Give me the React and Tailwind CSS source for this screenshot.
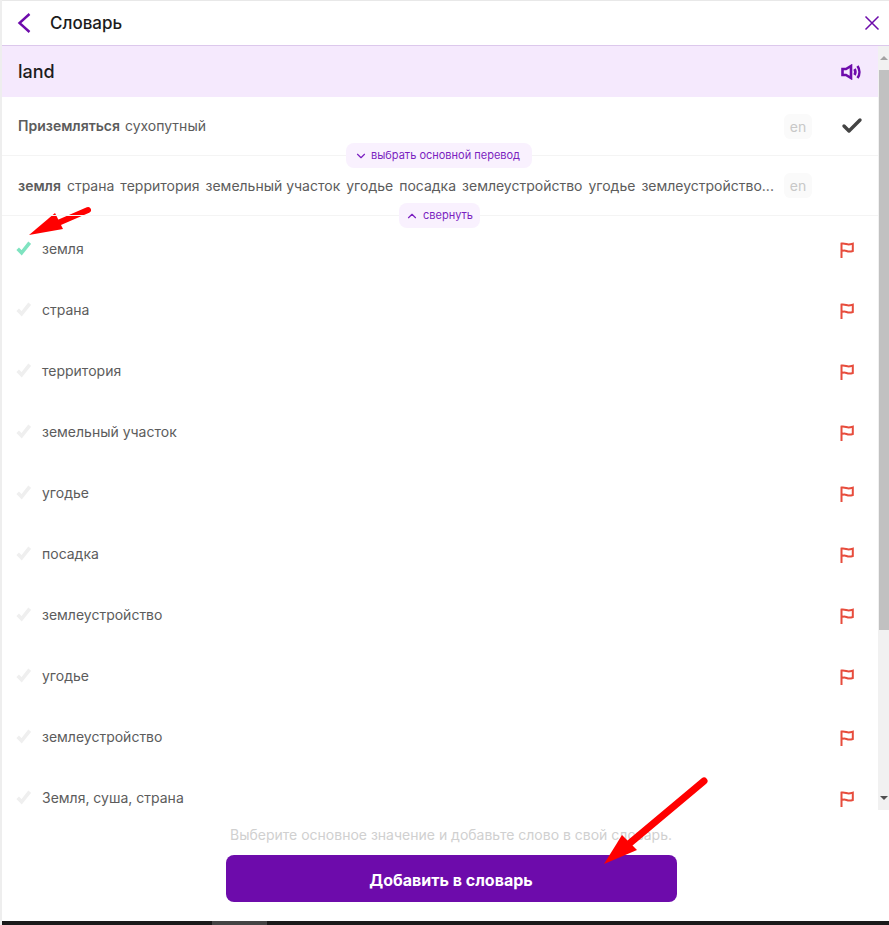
import { ChevronDown, ChevronUp, Check } from 'lucide-react';

const meanings = [
  'земля',
  'страна',
  'территория',
  'земельный участок',
  'угодье',
  'посадка',
  'землеустройство',
  'угодье',
  'землеустройство',
  'Земля, суша, страна',
];

const otherWords = [
  'страна',
  'территория',
  'земельный участок',
  'угодье',
  'посадка',
  'землеустройство',
  'угодье',
  'землеустройство...',
];

const CheckMark = ({ className }) => (
  <svg viewBox="0 0 16 16" className={className} fill="none">
    <path d="M1.8 8.2 L6 12.6 L14.6 1.8" stroke="currentColor" strokeWidth="3.8" />
  </svg>
);

const Flag = () => (
  <svg viewBox="0 0 14 16" className="w-[14px] h-[16px] text-[#e74c3c]" fill="none" stroke="currentColor" strokeWidth="2">
    <path d="M1.5 16 V1.6 C4.5 1 6.5 2.4 8.5 2.4 C10 2.4 11.5 2 12.8 1.6 V9 C10.5 9.8 8.5 9.8 6.5 9 C4.8 8.4 3 8.6 1.5 9" />
  </svg>
);

const Speaker = () => (
  <svg viewBox="0 0 20 16" className="w-5 h-4 text-[#6d0bab]" fill="none" stroke="currentColor" strokeWidth="2.6">
    <path d="M1.5 5 H5 L10 2 V14 L5 11 H1.5 Z" />
    <path d="M13.5 5 C14.6 6.8 14.6 9.2 13.5 11" />
    <path d="M16.5 2 C19 5.5 19 10.5 16.5 14" />
  </svg>
);

const Pill = ({ icon, children, className }) => (
  <div className={`absolute flex items-center h-[25px] rounded-[8px] bg-[#f9f1fe] text-[#7b1fc0] text-[11px] ${className}`}>
    {icon}
    {children}
  </div>
);

export default function App() {
  return (
    <div className="relative w-[889px] h-[925px] flex flex-col bg-white overflow-hidden border-l-2 border-[#eeeeee] font-['Inter',sans-serif]">
      <div className="h-[46px] shrink-0 flex items-center justify-between border-t border-b border-t-[#e8e8e8] border-b-[#dcc8ec] pl-[15px] pr-[9px]">
        <div className="flex items-center">
          <svg viewBox="0 0 14 20" className="w-[14px] h-[20px] text-[#6d0bab]" fill="none" stroke="currentColor" strokeWidth="2.4">
            <path d="M12.5 1 L2.5 10 L12.5 19" />
          </svg>
          <span className="ml-[19px] pt-[2px] text-[17px] font-medium text-[#1c1c1c]">Словарь</span>
        </div>
        <svg viewBox="0 0 16 16" className="w-[16px] h-[16px] text-[#6d0bab]" fill="none" stroke="currentColor" strokeWidth="1.5">
          <path d="M1.5 1.5 L14.5 14.5 M14.5 1.5 L1.5 14.5" />
        </svg>
      </div>

      <div className="h-[764px] shrink-0 flex">
        <div className="w-[876px] shrink-0 overflow-hidden">
          <div className="relative h-[51px] bg-[#f5e9fd] flex items-center justify-between pl-[16px] pr-[17px]">
            <span className="text-[18px] font-medium text-[#1c1c1c]">land</span>
            <Speaker />
          </div>

          <div className="relative h-[59px] flex items-center pl-[16px] pb-[2px] border-b border-[#f4f4f4] text-[14px] text-[#5c5c5c]">
            <span className="font-semibold">Приземляться</span>
            <span className="ml-[5px]">сухопутный</span>
            <span className="absolute left-[782px] top-[17px] w-[28px] h-[25px] flex items-center justify-center rounded-[6px] bg-[#fafafa] text-[#c8c8c8]">en</span>
            <Check className="absolute left-[838px] top-[17px] w-[24px] h-[24px] text-[#444444]" strokeWidth={3.4} />
            <Pill
              className="left-[344px] top-[46px] w-[186px] pl-[8px]"
              icon={<ChevronDown className="w-[14px] h-[14px] mr-[3px]" strokeWidth={2} />}
            >
              выбрать основной перевод
            </Pill>
          </div>

          <div className="relative h-[60px] flex items-center pl-[16px] border-b border-[#f4f4f4] text-[14px] text-[#5c5c5c] z-10">
            <span className="font-semibold">земля</span>
            {otherWords.map((word, i) => (
              <span key={i} className="ml-[6px] whitespace-nowrap">{word}</span>
            ))}
            <span className="absolute left-[782px] top-[17px] w-[28px] h-[25px] flex items-center justify-center rounded-[6px] bg-[#fafafa] text-[#c8c8c8]">en</span>
            <Pill
              className="left-[397px] top-[47px] w-[81px] pl-[6px]"
              icon={<ChevronUp className="w-[14px] h-[14px] mr-[4px]" strokeWidth={2} />}
            >
              свернуть
            </Pill>
          </div>

          <div className="pt-[3px]">
            {meanings.map((m, i) => (
              <div key={i} className="h-[61px] flex items-center pl-[14px] pr-[23px]">
                <CheckMark className={`w-[15px] h-[15px] -mt-[3px] ${i === 0 ? 'text-[#7fe3c0]' : 'text-[#efefef]'}`} />
                <span className="ml-[11px] -mt-[2px] text-[14px] text-[#5c5c5c]">{m}</span>
                <span className="ml-auto mr-[1px] flex"><Flag /></span>
              </div>
            ))}
          </div>
        </div>

        <div className="w-[11px] shrink-0 flex flex-col bg-[#f1f1f1]">
          <div className="h-[24px] flex items-center justify-center">
            <div className="w-0 h-0 border-x-[4px] border-x-transparent border-b-[4px] border-b-[#a3a3a3]" />
          </div>
          <div className="h-[560px] ml-[1px] bg-[#c1c1c1]" />
          <div className="mt-auto h-[24px] flex items-center justify-center">
            <div className="w-0 h-0 border-x-[4px] border-x-transparent border-t-[4px] border-t-[#505050]" />
          </div>
        </div>
      </div>

      <div className="flex-1 flex flex-col items-center pl-[11px]">
        <p className="mt-[17px] text-[14px] leading-[16px] text-[#d0d0d0]">
          Выберите основное значение и добавьте слово в свой словарь.
        </p>
        <button className="mt-[12px] w-[451px] h-[47px] pt-[3px] rounded-[8px] bg-[#6d0bab] text-white text-[16px] font-bold">
          Добавить в словарь
        </button>
      </div>

      <div className="h-[4px] shrink-0 -ml-[2px] bg-[#1a1a1a] flex">
        <div className="ml-[212px] w-[55px] bg-[#444444]" />
      </div>

      {/* red annotation arrows */}
      <svg className="absolute -left-[2px] top-0 w-[889px] h-[925px] pointer-events-none" viewBox="0 0 889 925" fill="none">
        <path d="M58 223 L88 210" stroke="#ff0000" strokeWidth="6" strokeLinecap="round" />
        <path d="M29 235 L55 213 L63 229 Z" fill="#ff0000" />
        <path d="M630 843 L704 781" stroke="#ff0000" strokeWidth="7" strokeLinecap="round" />
        <path d="M604 864 L622 835 L637 850 Z" fill="#ff0000" />
      </svg>
    </div>
  );
}
